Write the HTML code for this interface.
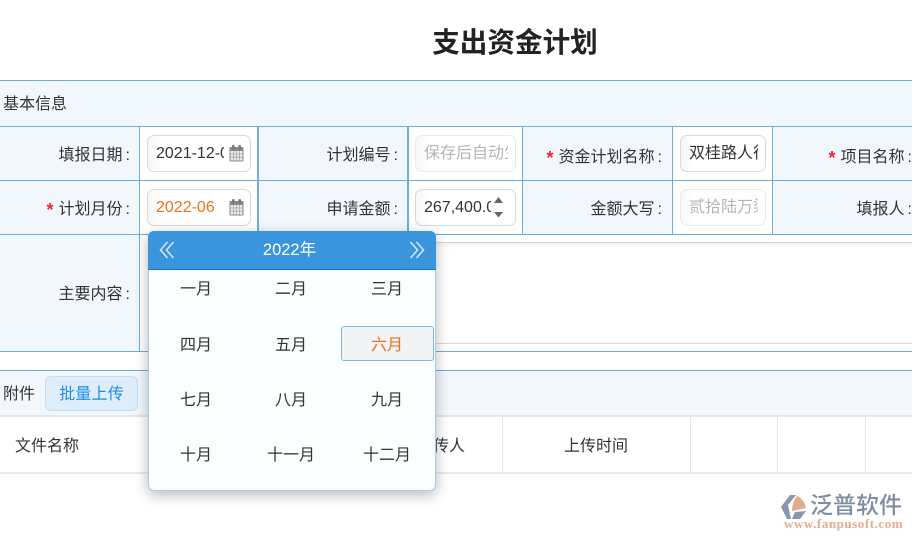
<!DOCTYPE html>
<html lang="zh"><head><meta charset="utf-8"><title>支出资金计划</title>
<style>
html,body{margin:0;padding:0;background:#fff}
#p{position:relative;width:912px;height:540px;overflow:hidden;background:#fff;font-family:"Liberation Sans","Noto Sans CJK SC",sans-serif;color:#333;font-size:16px}
#p div{position:absolute;box-sizing:border-box}
.h{left:0;width:912px;height:1px;background:#6fadde}
.v{width:1px;background:#6fadde}
.bg{background:#f2f7fe}
.l{height:24px;line-height:24px;text-align:right;white-space:nowrap;color:#333;font-size:16px}
.l b{color:#f5222d;font-weight:700;font-family:"Liberation Sans",sans-serif;margin-right:5px;font-size:18px;vertical-align:-2px}
.l i{font-style:normal;margin-left:3px}
.i{border:1px solid #d9d9d9;border-radius:7px;height:37px;background:linear-gradient(90deg,#f7f7f7,#fff 14px);line-height:35px;padding-left:8px;overflow:hidden;white-space:nowrap;font-size:16px;color:#333}
.i span{display:block;overflow:hidden;white-space:nowrap}
.dis{border-color:#eaeaea;color:#b5b5b5}
.m{width:94px;height:35px;line-height:35px;text-align:center;color:#333;font-size:16px}
</style></head><body><div id="p">
<div style="left:0;width:1030px;top:23px;height:40px;line-height:40px;text-align:center;font-size:27.6px;font-weight:700;color:#222">支出资金计划</div>

<div class="bg" style="left:0;top:80px;width:912px;height:46px"></div>
<div class="bg" style="left:0;top:126px;width:139px;height:225px"></div>
<div class="bg" style="left:258px;top:126px;width:149px;height:108px"></div>
<div class="bg" style="left:522px;top:126px;width:150px;height:108px"></div>
<div class="bg" style="left:772px;top:126px;width:140px;height:108px"></div>

<div class="h" style="top:80px"></div>
<div class="h" style="top:126px"></div>
<div class="h" style="top:180px"></div>
<div class="h" style="top:234px"></div>
<div class="h" style="top:351px"></div>
<div class="h" style="top:370px"></div>
<div class="v" style="left:139px;top:126px;height:225px"></div>
<div class="v" style="left:257px;top:126px;height:108px;width:2px"></div>
<div class="v" style="left:407px;top:126px;height:108px;width:2px"></div>
<div class="v" style="left:522px;top:126px;height:108px"></div>
<div class="v" style="left:672px;top:126px;height:108px"></div>
<div class="v" style="left:772px;top:126px;height:108px"></div>

<div style="left:3px;top:93px;height:24px;line-height:24px">基本信息</div>

<div class="l" style="right:782px;top:144px">填报日期<i>:</i></div>
<div class="l" style="right:782px;top:198px"><b>*</b>计划月份<i>:</i></div>
<div class="l" style="right:782px;top:283px">主要内容<i>:</i></div>
<div class="l" style="right:514px;top:144px">计划编号<i>:</i></div>
<div class="l" style="right:514px;top:198px">申请金额<i>:</i></div>
<div class="l" style="right:250px;top:146px"><b>*</b>资金计划名称<i>:</i></div>
<div class="l" style="right:250px;top:198px">金额大写<i>:</i></div>
<div class="l" style="right:0;top:146px"><b>*</b>项目名称<i>:</i></div>
<div class="l" style="right:0;top:198px">填报人<i>:</i></div>

<div class="i" style="left:147px;top:135px;width:104px"><span style="width:68px">2021-12-09</span></div>
<div class="i" style="left:147px;top:189px;width:104px;color:#e8731c"><span style="width:68px">2022-06</span></div>
<div class="i dis" style="left:415px;top:135px;width:101px"><span style="width:84px">保存后自动生成</span></div>
<div class="i" style="left:415px;top:189px;width:101px"><span style="width:67px">267,400.00</span></div>
<div class="i" style="left:680px;top:135px;width:86px"><span style="width:69px">双桂路人行道</span></div>
<div class="i dis" style="left:680px;top:189px;width:86px"><span style="width:69px">贰拾陆万柒仟</span></div>

<svg style="position:absolute;left:229px;top:145px;width:15px;height:17px" viewBox="0 0 15 17"><rect x=".5" y="2" width="14" height="14.5" rx="1" fill="#8a8a8a"/><rect x="3" y="0" width="2.6" height="5" rx="1" fill="#7a7a7a"/><rect x="9.4" y="0" width="2.6" height="5" rx="1" fill="#7a7a7a"/><path d="M1.5 6h12v9.5h-12z" fill="#eee"/><path d="M1.5 9h12M1.5 12.2h12M4.6 6v9.5M7.5 6v9.5M10.4 6v9.5" stroke="#a5a5a5" stroke-width=".8"/></svg>
<svg style="position:absolute;left:229px;top:199px;width:15px;height:17px" viewBox="0 0 15 17"><rect x=".5" y="2" width="14" height="14.5" rx="1" fill="#8a8a8a"/><rect x="3" y="0" width="2.6" height="5" rx="1" fill="#7a7a7a"/><rect x="9.4" y="0" width="2.6" height="5" rx="1" fill="#7a7a7a"/><path d="M1.5 6h12v9.5h-12z" fill="#eee"/><path d="M1.5 9h12M1.5 12.2h12M4.6 6v9.5M7.5 6v9.5M10.4 6v9.5" stroke="#a5a5a5" stroke-width=".8"/></svg>
<svg style="position:absolute;left:493px;top:196px;width:11px;height:22px" viewBox="0 0 11 22"><path d="M5.5 1l4.5 6H1zM1 16h9l-4.5 5.5z" fill="#666"/></svg>

<div style="left:408px;top:242px;width:520px;height:102px;border:1px solid #d6d6d6;border-radius:4px;background:#fff;box-shadow:inset 0 6px 8px -6px rgba(0,0,0,.1)"></div>

<div class="bg" style="left:0;top:371px;width:912px;height:45px"></div>
<div style="left:0;top:415px;width:912px;height:2px;background:#e4e6ea"></div>
<div style="left:3px;top:383px;height:24px;line-height:24px">附件</div>
<div style="left:45px;top:376px;width:93px;height:35px;background:#deedfb;border:1px solid #c6def5;border-radius:6px;text-align:center;line-height:35px;color:#1b8fee;font-size:16px;letter-spacing:.2px">批量上传</div>

<div style="left:15px;top:435px;height:24px;line-height:24px">文件名称</div>
<div style="left:417px;top:435px;height:24px;line-height:24px">上传人</div>
<div style="left:564px;top:435px;height:24px;line-height:24px">上传时间</div>
<div style="left:502px;top:417px;width:1px;height:55px;background:#e4e6ea"></div>
<div style="left:690px;top:417px;width:1px;height:55px;background:#e4e6ea"></div>
<div style="left:777px;top:417px;width:1px;height:55px;background:#e4e6ea"></div>
<div style="left:865px;top:417px;width:1px;height:55px;background:#e4e6ea"></div>
<div style="left:0;top:472px;width:912px;height:2px;background:#e2ebf4"></div>

<div style="left:148px;top:231px;width:288px;height:260px;background:#fbfefe;border:1px solid #a9cde8;border-radius:6px;box-shadow:0 4px 14px rgba(0,0,0,.28)"></div>
<div style="left:148px;top:231px;width:288px;height:39px;background:#3a95dd;border-bottom:1px solid #0f78cc;border-radius:6px 6px 0 0"></div>
<div style="left:148px;top:238px;width:283px;height:24px;line-height:24px;text-align:center;color:#fff;font-size:16.5px">2022年</div>
<svg style="position:absolute;left:159px;top:241px;width:16px;height:18px" viewBox="0 0 16 18" fill="none" stroke="#cfe6f8" stroke-width="1.6"><path d="M8.5 1L1.5 9l7 8M14.5 1L7.5 9l7 8"/></svg>
<svg style="position:absolute;left:409px;top:241px;width:16px;height:18px" viewBox="0 0 16 18" fill="none" stroke="#cfe6f8" stroke-width="1.6"><path d="M1.5 1l7 8-7 8M7.5 1l7 8-7 8"/></svg>

<div style="left:341px;top:326px;width:93px;height:35px;background:#f2f3f5;border:1px solid #80b5e0;border-radius:3px"></div>
<div class="m" style="left:149px;top:272px">一月</div>
<div class="m" style="left:244px;top:272px">二月</div>
<div class="m" style="left:340px;top:272px">三月</div>
<div class="m" style="left:149px;top:328px">四月</div>
<div class="m" style="left:244px;top:328px">五月</div>
<div class="m" style="left:340px;top:328px;color:#e8731c">六月</div>
<div class="m" style="left:149px;top:383px">七月</div>
<div class="m" style="left:244px;top:383px">八月</div>
<div class="m" style="left:340px;top:383px">九月</div>
<div class="m" style="left:149px;top:438px">十月</div>
<div class="m" style="left:244px;top:438px">十一月</div>
<div class="m" style="left:340px;top:438px">十二月</div>

<svg style="position:absolute;left:780px;top:494px;width:28px;height:26px" viewBox="780 494 28 26"><path d="M781 507l9-12h6l-8 10 3 14h-4z" fill="#8a97ad"/><path d="M797 496c5 2 8 7 9 12l-14 3c0-6 2-11 5-15z" fill="#e2ab8c"/><path d="M795 512l11-1-6 8h-8z" fill="#8a97ad"/></svg>
<div style="left:810px;top:491px;height:28px;line-height:28px;font-size:23px;color:#7f8ca3;white-space:nowrap;font-weight:500">泛普软件</div>
<div style="left:784px;top:516px;height:15px;line-height:15px;font-family:'Liberation Serif',serif;font-size:13px;font-weight:700;color:#e7ab8c;white-space:nowrap;letter-spacing:.55px">www.fanpusoft.com</div>
</div></body></html>
